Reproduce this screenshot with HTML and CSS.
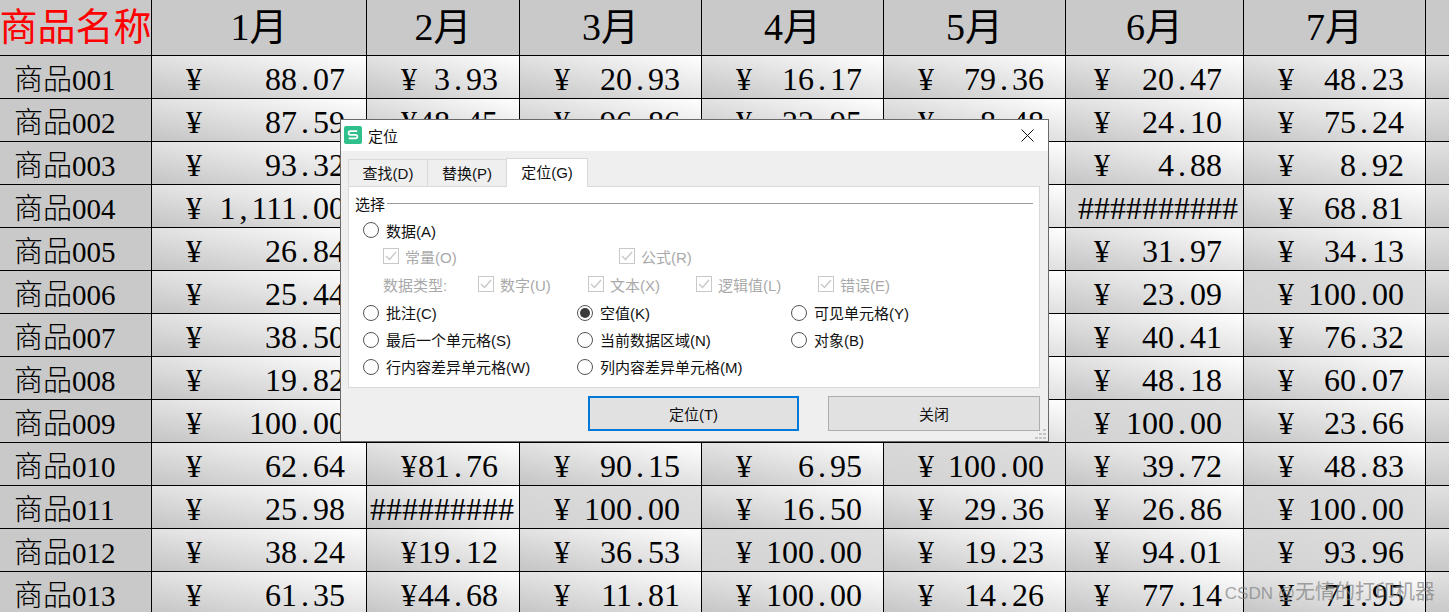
FILE: index.html
```html
<!DOCTYPE html>
<html lang="zh">
<head>
<meta charset="utf-8">
<title>定位</title>
<link rel="stylesheet" href="styles.css">
</head>
<body>
<div class="sheet">
  <div class="hd name">商品名称</div><div class="hd">1月</div><div class="hd">2月</div><div class="hd">3月</div><div class="hd">4月</div><div class="hd">5月</div><div class="hd">6月</div><div class="hd">7月</div><div class="hd"></div>

  <div class="lb">商品001</div><div class="c"><i>¥</i><b>88<u>.</u>07</b></div><div class="c"><i>¥</i><b>3<u>.</u>93</b></div><div class="c"><i>¥</i><b>20<u>.</u>93</b></div><div class="c"><i>¥</i><b>16<u>.</u>17</b></div><div class="c"><i>¥</i><b>79<u>.</u>36</b></div><div class="c c6"><i>¥</i><b>20<u>.</u>47</b></div><div class="c"><i>¥</i><b>48<u>.</u>23</b></div><div class="e"></div>
  <div class="lb">商品002</div><div class="c"><i>¥</i><b>87<u>.</u>59</b></div><div class="c"><i>¥</i><b>48<u>.</u>45</b></div><div class="c"><i>¥</i><b>96<u>.</u>86</b></div><div class="c"><i>¥</i><b>22<u>.</u>95</b></div><div class="c"><i>¥</i><b>8<u>.</u>48</b></div><div class="c c6"><i>¥</i><b>24<u>.</u>10</b></div><div class="c"><i>¥</i><b>75<u>.</u>24</b></div><div class="e"></div>
  <div class="lb">商品003</div><div class="c"><i>¥</i><b>93<u>.</u>32</b></div><div class="c"></div><div class="c"></div><div class="c"></div><div class="c"></div><div class="c c6"><i>¥</i><b>4<u>.</u>88</b></div><div class="c"><i>¥</i><b>8<u>.</u>92</b></div><div class="e"></div>
  <div class="lb">商品004</div><div class="c"><i>¥</i><b>1<u>,</u>111<u>.</u>00</b></div><div class="c"></div><div class="c"></div><div class="c"></div><div class="c"></div><div class="c flat hash">##########</div><div class="c"><i>¥</i><b>68<u>.</u>81</b></div><div class="e"></div>
  <div class="lb">商品005</div><div class="c"><i>¥</i><b>26<u>.</u>84</b></div><div class="c"></div><div class="c"></div><div class="c"></div><div class="c"></div><div class="c c6"><i>¥</i><b>31<u>.</u>97</b></div><div class="c"><i>¥</i><b>34<u>.</u>13</b></div><div class="e"></div>
  <div class="lb">商品006</div><div class="c"><i>¥</i><b>25<u>.</u>44</b></div><div class="c"></div><div class="c"></div><div class="c"></div><div class="c"></div><div class="c c6"><i>¥</i><b>23<u>.</u>09</b></div><div class="c flat"><i>¥</i><b>100<u>.</u>00</b></div><div class="e"></div>
  <div class="lb">商品007</div><div class="c"><i>¥</i><b>38<u>.</u>50</b></div><div class="c"></div><div class="c"></div><div class="c"></div><div class="c"></div><div class="c c6"><i>¥</i><b>40<u>.</u>41</b></div><div class="c"><i>¥</i><b>76<u>.</u>32</b></div><div class="e"></div>
  <div class="lb">商品008</div><div class="c"><i>¥</i><b>19<u>.</u>82</b></div><div class="c"></div><div class="c"></div><div class="c"></div><div class="c"></div><div class="c c6"><i>¥</i><b>48<u>.</u>18</b></div><div class="c"><i>¥</i><b>60<u>.</u>07</b></div><div class="e"></div>
  <div class="lb">商品009</div><div class="c"><i>¥</i><b>100<u>.</u>00</b></div><div class="c"></div><div class="c"></div><div class="c"></div><div class="c"></div><div class="c c6 flat"><i>¥</i><b>100<u>.</u>00</b></div><div class="c"><i>¥</i><b>23<u>.</u>66</b></div><div class="e"></div>
  <div class="lb">商品010</div><div class="c"><i>¥</i><b>62<u>.</u>64</b></div><div class="c"><i>¥</i><b>81<u>.</u>76</b></div><div class="c"><i>¥</i><b>90<u>.</u>15</b></div><div class="c"><i>¥</i><b>6<u>.</u>95</b></div><div class="c flat"><i>¥</i><b>100<u>.</u>00</b></div><div class="c c6"><i>¥</i><b>39<u>.</u>72</b></div><div class="c"><i>¥</i><b>48<u>.</u>83</b></div><div class="e"></div>
  <div class="lb">商品011</div><div class="c"><i>¥</i><b>25<u>.</u>98</b></div><div class="c hash">#########</div><div class="c flat"><i>¥</i><b>100<u>.</u>00</b></div><div class="c"><i>¥</i><b>16<u>.</u>50</b></div><div class="c"><i>¥</i><b>29<u>.</u>36</b></div><div class="c c6"><i>¥</i><b>26<u>.</u>86</b></div><div class="c flat"><i>¥</i><b>100<u>.</u>00</b></div><div class="e"></div>
  <div class="lb">商品012</div><div class="c"><i>¥</i><b>38<u>.</u>24</b></div><div class="c"><i>¥</i><b>19<u>.</u>12</b></div><div class="c"><i>¥</i><b>36<u>.</u>53</b></div><div class="c flat"><i>¥</i><b>100<u>.</u>00</b></div><div class="c"><i>¥</i><b>19<u>.</u>23</b></div><div class="c c6"><i>¥</i><b>94<u>.</u>01</b></div><div class="c flat"><i>¥</i><b>93<u>.</u>96</b></div><div class="e"></div>
  <div class="lb">商品013</div><div class="c"><i>¥</i><b>61<u>.</u>35</b></div><div class="c"><i>¥</i><b>44<u>.</u>68</b></div><div class="c"><i>¥</i><b>11<u>.</u>81</b></div><div class="c"><i>¥</i><b>100<u>.</u>00</b></div><div class="c"><i>¥</i><b>14<u>.</u>26</b></div><div class="c c6"><i>¥</i><b>77<u>.</u>14</b></div><div class="c"><i>¥</i><b>71<u>.</u>95</b></div><div class="e"></div>
</div>

<div class="dialog">
  <div class="titlebar">
    <svg class="logo" width="18" height="18" viewBox="0 0 18 18"><rect width="18" height="18" rx="2" fill="#2fc08c"/><path d="M13.2 5.2H6.4Q4.6 5.2 4.6 7Q4.6 8.8 6.4 8.8H11.6Q13.4 8.8 13.4 10.6Q13.4 12.4 11.6 12.4H4.8" fill="none" stroke="#fff" stroke-width="1.7"/></svg>
    <span class="title">定位</span>
    <svg class="close" width="13" height="13" viewBox="0 0 13 13"><path d="M.5.5l12 12M12.5.5l-12 12" stroke="#111" stroke-width="1" fill="none"/></svg>
  </div>
  <div class="body">
    <div class="tabs">
      <div class="tab">查找(D)</div>
      <div class="tab">替换(P)</div>
      <div class="tab on">定位(G)</div>
    </div>
    <div class="panel">
      <div class="legend"><span>选择</span><span class="rule"></span></div>
      <div class="row r1"><label class="opt"><span class="radio"></span>数据(A)</label></div>
      <div class="row r2 kinds dim">
        <label class="chk"><span class="box"><svg width="12" height="10" viewBox="0 0 12 10"><path d="M1 5l3.5 3.5L11 1" fill="none" stroke="#c6c6c6" stroke-width="1.3"/></svg></span>常量(O)</label>
        <label class="chk"><span class="box"><svg width="12" height="10" viewBox="0 0 12 10"><path d="M1 5l3.5 3.5L11 1" fill="none" stroke="#c6c6c6" stroke-width="1.3"/></svg></span>公式(R)</label>
      </div>
      <div class="row r3 types dim">
        <span>数据类型:</span>
        <label class="chk"><span class="box"><svg width="12" height="10" viewBox="0 0 12 10"><path d="M1 5l3.5 3.5L11 1" fill="none" stroke="#c6c6c6" stroke-width="1.3"/></svg></span>数字(U)</label>
        <label class="chk"><span class="box"><svg width="12" height="10" viewBox="0 0 12 10"><path d="M1 5l3.5 3.5L11 1" fill="none" stroke="#c6c6c6" stroke-width="1.3"/></svg></span>文本(X)</label>
        <label class="chk"><span class="box"><svg width="12" height="10" viewBox="0 0 12 10"><path d="M1 5l3.5 3.5L11 1" fill="none" stroke="#c6c6c6" stroke-width="1.3"/></svg></span>逻辑值(L)</label>
        <label class="chk"><span class="box"><svg width="12" height="10" viewBox="0 0 12 10"><path d="M1 5l3.5 3.5L11 1" fill="none" stroke="#c6c6c6" stroke-width="1.3"/></svg></span>错误(E)</label>
      </div>
      <div class="opts">
        <label class="opt"><span class="radio"></span>批注(C)</label>
        <label class="opt"><span class="radio sel"></span>空值(K)</label>
        <label class="opt"><span class="radio"></span>可见单元格(Y)</label>
        <label class="opt"><span class="radio"></span>最后一个单元格(S)</label>
        <label class="opt"><span class="radio"></span>当前数据区域(N)</label>
        <label class="opt"><span class="radio"></span>对象(B)</label>
        <label class="opt"><span class="radio"></span>行内容差异单元格(W)</label>
        <label class="opt"><span class="radio"></span>列内容差异单元格(M)</label>
      </div>
    </div>
    <div class="actions">
      <button class="btn primary">定位(T)</button>
      <button class="btn">关闭</button>
    </div>
    <svg class="grip" width="11" height="10" viewBox="0 0 11 10"><path d="M8 0h3v2H8zM4 4h3v2H4zM8 4h3v2H8zM0 8h3v2H0zM4 8h3v2H4zM8 8h3v2H8z" fill="#c4c4c4"/></svg>
  </div>
</div>

<div class="mark"><span class="mark-l">CSDN @</span>无情的打印机器</div>
</body>
</html>
```

FILE: styles.css
```css
* { box-sizing: border-box; }
html, body { margin: 0; padding: 0; }
body {
  width: 1449px;
  height: 612px;
  overflow: hidden;
  position: relative;
  background: #fff;
}

/* sheet */
.sheet {
  display: grid;
  grid-template-columns: 152px 215px 153px 182px 182px 182px 178px 182px 1fr;
  grid-template-rows: 56px repeat(13, 43px);
  font-family: "Liberation Serif", "Noto Sans CJK SC", serif;
  color: #000;
}
.sheet > div {
  border-right: 1px solid #000;
  border-bottom: 1px solid #000;
  white-space: nowrap;
}
.sheet > div:nth-child(9n) { border-right: 0; }
.hd {
  background: #c9c9c9;
  font-size: 38px;
  line-height: 55px;
  text-align: center;
}
.hd.name {
  color: #f00;
  overflow: visible;
  display: flex;
  justify-content: center;
}
.lb {
  background: #c9c9c9;
  font-size: 29px;
  font-weight: 300;
  line-height: 42px;
  padding: 3px 0 0 14px;
}
.c {
  background: linear-gradient(to top right, #c4c4c4, #fff);
  font-size: 32px;
  line-height: 42px;
  padding: 2px 21px 0 34px;
  display: flex;
  justify-content: space-between;
}
.c6 { padding-left: 28px; }
.flat { background: linear-gradient(to top right, #d2d2d2, #dedede); }
.hash { justify-content: flex-end; padding-left: 0; padding-right: 5px; }
.e { background: linear-gradient(to bottom, #e2e2e2, #c8c8c8); }
.c i, .c b { font-style: normal; font-weight: 400; }
.c u {
  display: inline-block;
  width: 16px;
  text-align: center;
  text-decoration: none;
}

/* dialog */
.dialog {
  position: absolute;
  left: 340px;
  top: 119px;
  width: 709px;
  height: 323px;
  border: 1px solid #6a6a6a;
  background: #efefef;
  font-family: "Liberation Sans", "Noto Sans CJK SC", sans-serif;
  font-size: 15px;
  color: #111;
}
.titlebar {
  height: 31px;
  background: #fff;
  display: flex;
  align-items: center;
  padding: 0 14px 1px 3px;
}
.title { margin-left: 6px; }
.close { margin-left: auto; }
.body {
  position: relative;
  padding: 7px 8px 0 7px;
  height: 290px;
}
.tabs {
  display: flex;
  height: 28px;
  position: relative;
  z-index: 1;
}
.tab {
  width: 79px;
  height: 28px;
  border: 1px solid #d9d9d9;
  border-bottom: 0;
  border-right: 0;
  margin-top: 1px;
  text-align: center;
  line-height: 27px;
}
.tab.on {
  width: 82px;
  margin-top: 0;
  height: 29px;
  background: #fff;
  border-right: 1px solid #d9d9d9;
}
.panel {
  background: #fff;
  border: 1px solid #d9d9d9;
  height: 202px;
  padding: 0 0 0 14px;
}
.legend {
  display: flex;
  align-items: center;
  margin-left: -8px;
  margin-right: 6px;
  height: 32px;
}
.rule {
  flex: 1;
  height: 1px;
  background: #9c9c9c;
  margin-left: 2px;
}
.row {
  display: grid;
  align-items: center;
}
.r1 { height: 24px; margin-top: -1px; }
.r2 { height: 28px; }
.r3 { height: 28px; }
.kinds { padding-left: 20px; grid-template-columns: 236px auto; }
.types { padding-left: 20px; grid-template-columns: 95px 110px 108px 122px auto; }
.dim { color: #a9a9a9; }
.opt, .chk {
  display: flex;
  align-items: center;
  white-space: nowrap;
}
.radio {
  width: 16px;
  height: 16px;
  border: 1.4px solid #555;
  border-radius: 50%;
  margin-right: 7px;
  flex: none;
  display: flex;
  align-items: center;
  justify-content: center;
}
.radio.sel::after {
  content: "";
  width: 10px;
  height: 10px;
  border-radius: 50%;
  background: #3a3a3a;
}
.box {
  width: 16px;
  height: 16px;
  border: 1px solid #c8c8c8;
  margin-right: 6px;
  flex: none;
  display: flex;
  align-items: center;
  justify-content: center;
}
.opts {
  display: grid;
  grid-template-columns: repeat(3, 214px);
  grid-auto-rows: 27px;
  align-items: center;
  margin-top: 1px;
}
.actions {
  display: flex;
  padding-left: 240px;
  margin-top: 8px;
}
.btn {
  width: 212px;
  height: 35px;
  border: 1px solid #adadad;
  background: #e1e1e1;
  font: inherit;
  color: #111;
  padding: 0;
  margin-left: 29px;
}
.btn.primary {
  width: 211px;
  border: 2px solid #0078d7;
  margin-left: 0;
}
.grip {
  position: absolute;
  right: 2px;
  bottom: 2px;
}

/* watermark */
.mark {
  position: absolute;
  right: 14px;
  bottom: 4px;
  font-family: "Liberation Sans", "Noto Sans CJK SC", sans-serif;
  font-size: 20px;
  line-height: 28px;
  color: rgba(130, 130, 130, 0.72);
  white-space: nowrap;
}
.mark-l { font-size: 17px; }
```
